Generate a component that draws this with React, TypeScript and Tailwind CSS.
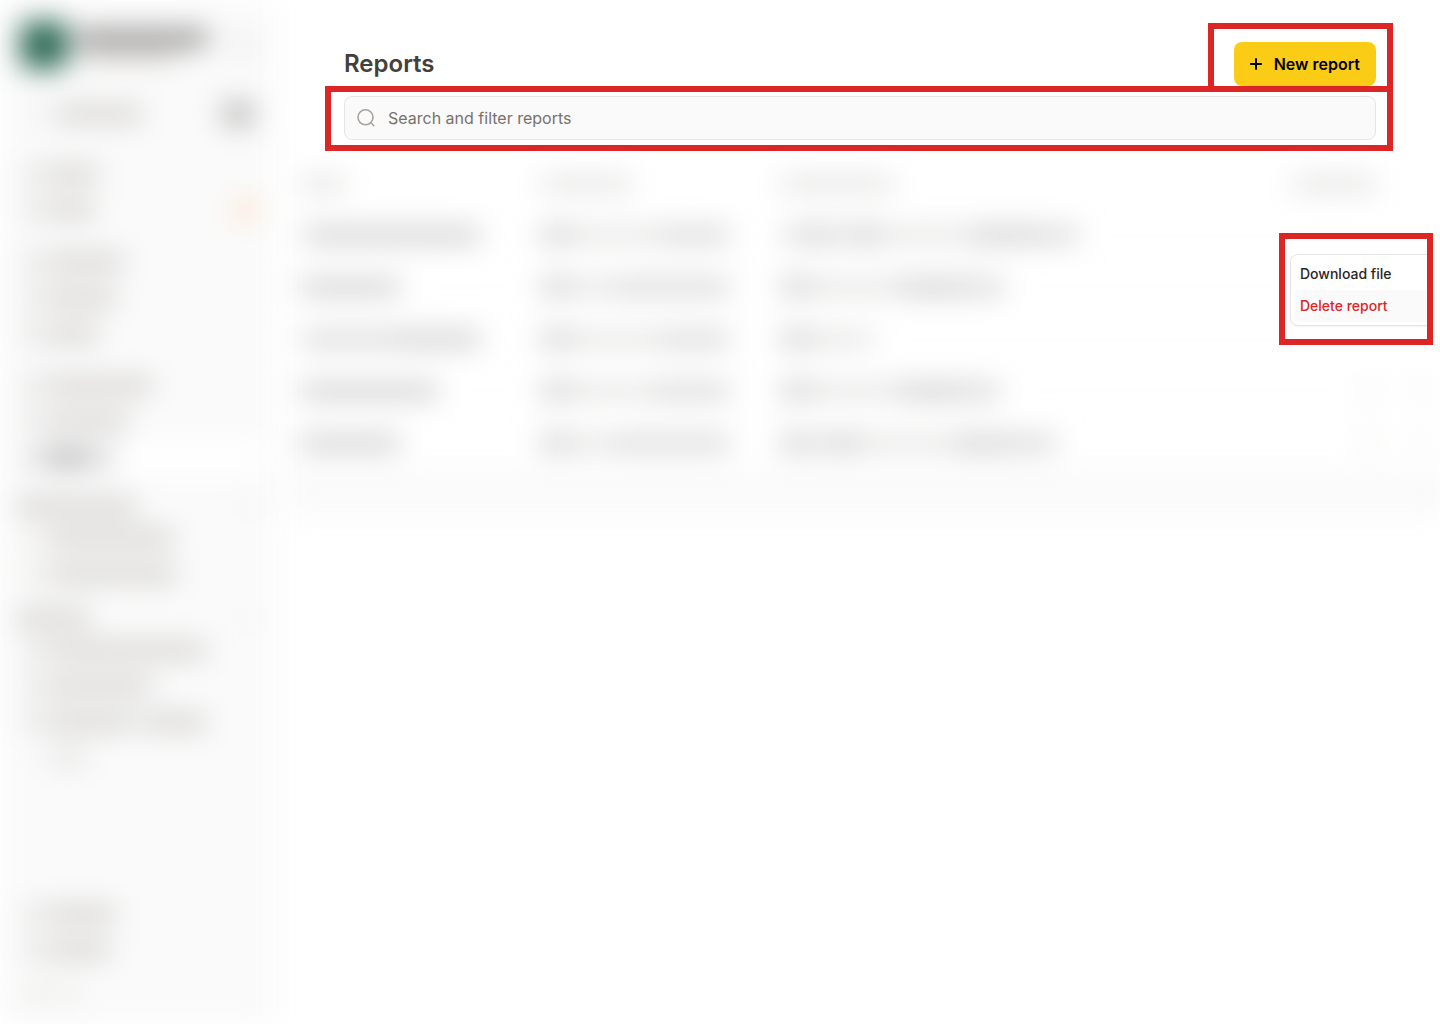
import React from "react";
import { Plus } from "lucide-react";

type Tone = "faint" | "light" | "mid" | "dark" | "strong" | "deep" | "warm" | "gap";
type Segment = [width: number, tone: Tone];

const tones: Record<Tone, string> = {
  faint: "bg-[#efeeec]",
  light: "bg-[#e4e4e3]",
  mid: "bg-[#d6d6d6]",
  dark: "bg-[#cecece]",
  strong: "bg-[#8a8a89]",
  deep: "bg-[#a6a6a6]",
  warm: "bg-[#d3d1cf]",
  gap: "bg-transparent",
};

/** A line of concealed text, drawn as a run of soft bars. */
function Line({ segments }: { segments: Segment[] }) {
  return (
    <span className="flex items-center">
      {segments.map(([width, tone], i) => (
        <span key={i} className={`h-4 shrink-0 ${tones[tone]}`} style={{ width }} />
      ))}
    </span>
  );
}

function NavItem({ segments, active = false, badge = false, icon = "light" }: {
  segments: Segment[];
  active?: boolean;
  badge?: boolean;
  icon?: Tone;
}) {
  return (
    <li className={`flex h-9 items-center rounded-lg pl-2 pr-1 ${active ? "bg-white" : ""}`}>
      <span className={`mr-1 h-5 w-5 rounded ${tones[icon]}`} />
      <Line segments={segments} />
      {badge && <span className="ml-auto size-5 rounded-full bg-[#ffd9b5]" />}
    </li>
  );
}

function SectionLabel({ width }: { width: number }) {
  return (
    <div className="flex h-7 items-center justify-between pr-1">
      <Line segments={[[width, "warm"]]} />
      <span className="size-3 bg-[#f1f0ef]" />
    </div>
  );
}

function Sidebar() {
  return (
    <aside aria-hidden="true" className="flex w-[276px] shrink-0 flex-col bg-[#fafafa] px-4 pb-3 pt-5 blur-[14px]">
      <div className="flex h-[50px] items-center pl-1">
        <span className="size-12 rounded-xl bg-[#2f6b57]" />
        <div className="ml-2 flex flex-col gap-1">
          <Line segments={[[132, "strong"]]} />
          <span className="ml-1 h-2.5 w-24 bg-[#cfcac7]" />
        </div>
        <span className="ml-auto mr-2 size-4 bg-[#e4e3e2]" />
      </div>
      <div className="mt-6 flex h-10 items-center pl-3 pr-1.5">
        <span className="mr-3 size-4 bg-[#f0efee]" />
        <Line segments={[[86, "warm"]]} />
        <span className="ml-auto h-6 w-8 rounded bg-[#bebcbb]" />
      </div>
      <ul className="mt-[22px]">
        <NavItem segments={[[50, "warm"]]} />
        <NavItem segments={[[46, "warm"]]} badge />
      </ul>
      <ul className="mt-4">
        <NavItem segments={[[76, "warm"]]} />
        <NavItem segments={[[68, "warm"]]} />
        <NavItem segments={[[50, "warm"]]} />
      </ul>
      <ul className="mt-4">
        <NavItem segments={[[104, "warm"]]} />
        <NavItem segments={[[80, "warm"]]} />
        <NavItem segments={[[36, "deep"], [30, "dark"]]} icon="mid" active />
      </ul>
      <div className="mt-4">
        <SectionLabel width={120} />
        <ul>
          <NavItem segments={[[126, "warm"]]} icon="faint" />
          <NavItem segments={[[128, "warm"]]} icon="faint" />
        </ul>
      </div>
      <div className="mt-3">
        <SectionLabel width={74} />
        <ul>
          <NavItem segments={[[158, "warm"]]} />
          <NavItem segments={[[104, "warm"]]} />
          <NavItem segments={[[80, "warm"], [20, "light"], [58, "warm"]]} />
          <NavItem segments={[[40, "light"]]} icon="gap" />
        </ul>
      </div>
      <ul className="mt-auto">
        <NavItem segments={[[68, "warm"]]} />
        <NavItem segments={[[62, "warm"]]} />
      </ul>
      <ul className="mt-2">
        <NavItem segments={[[32, "faint"]]} icon="faint" />
      </ul>
    </aside>
  );
}

const rows: { name: Segment[]; created: Segment[]; period: Segment[]; actions: boolean }[] = [
  {
    name: [[4, "gap"], [84, "dark"], [92, "dark"]],
    created: [[32, "dark"], [88, "light"], [70, "mid"]],
    period: [[18, "light"], [32, "dark"], [16, "light"], [34, "dark"], [92, "light"], [62, "dark"], [44, "mid"]],
    actions: false,
  },
  {
    name: [[100, "dark"]],
    created: [[32, "dark"], [40, "light"], [118, "mid"]],
    period: [[32, "dark"], [88, "light"], [62, "dark"], [42, "mid"]],
    actions: false,
  },
  {
    name: [[2, "gap"], [94, "mid"], [84, "dark"]],
    created: [[32, "dark"], [88, "light"], [70, "mid"]],
    period: [[32, "dark"], [62, "light"]],
    actions: false,
  },
  {
    name: [[138, "dark"]],
    created: [[32, "dark"], [82, "light"], [76, "mid"]],
    period: [[32, "dark"], [88, "light"], [62, "dark"], [38, "mid"]],
    actions: true,
  },
  {
    name: [[100, "dark"]],
    created: [[32, "dark"], [40, "light"], [118, "mid"]],
    period: [[32, "dark"], [14, "light"], [34, "dark"], [96, "light"], [50, "dark"], [50, "mid"]],
    actions: true,
  },
];

function ReportsTable() {
  return (
    <table aria-hidden="true" className="ml-2 mt-5 w-full table-fixed border-collapse blur-[14px]">
      <colgroup>
        <col className="w-[256px]" />
        <col className="w-[240px]" />
        <col />
        <col className="w-[156px]" />
      </colgroup>
      <thead>
        <tr className="h-[49px]">
          <th className="p-0 pl-4"><Line segments={[[46, "light"]]} /></th>
          <th className="p-0"><Line segments={[[92, "light"]]} /></th>
          <th className="p-0"><Line segments={[[114, "light"]]} /></th>
          <th className="p-0"><Line segments={[[84, "light"]]} /></th>
        </tr>
      </thead>
      <tbody>
        {rows.map((row, i) => (
          <tr key={i} className="h-[52px] border-t border-[#f7f7f7]">
            <td className="p-0 pl-4"><Line segments={row.name} /></td>
            <td className="p-0"><Line segments={row.created} /></td>
            <td className="p-0"><Line segments={row.period} /></td>
            <td className="p-0">
              {row.actions && <Line segments={[[70, "gap"], [14, "faint"], [40, "gap"], [10, "faint"]]} />}
            </td>
          </tr>
        ))}
      </tbody>
      <tfoot>
        <tr className="h-12 bg-[#fafafa]">
          <td colSpan={4} />
        </tr>
      </tfoot>
    </table>
  );
}

export default function App() {
  return (
    <div className="flex min-h-screen overflow-hidden bg-white font-['Inter',sans-serif]">
      <Sidebar />
      <main className="relative min-w-0 flex-1">
        <header className="pl-[68px] pr-16 pt-[42px]">
          <div className="flex h-11 items-center justify-between">
            <h1 className="text-2xl font-semibold text-[#44403c]">Reports</h1>
            <div className="relative">
              <button
                type="button"
                className="flex h-11 items-center gap-2 rounded-lg bg-[#facc15] pl-3 pr-4 text-base font-semibold text-black"
              >
                <Plus className="size-5" strokeWidth={2.4} strokeLinecap="butt" aria-hidden="true" />
                New report
              </button>
              <span className="pointer-events-none absolute -bottom-1.5 -left-[26px] -right-[17px] -top-[19px] border-[6px] border-[#dc2626]" />
            </div>
          </div>
          <div className="relative mt-2.5">
            <svg
              className="pointer-events-none absolute left-3 top-3 size-5 text-[#a8a29e]"
              viewBox="0 0 20 20"
              fill="none"
              stroke="currentColor"
              strokeWidth="1.6"
              strokeLinecap="round"
              aria-hidden="true"
            >
              <circle cx="9.5" cy="9.3" r="7.5" />
              <path d="m14.9 14.7 3 3" />
            </svg>
            <input
              type="search"
              aria-label="Search and filter reports"
              placeholder="Search and filter reports"
              className="block h-11 w-full rounded-lg border border-[#e5e5e5] bg-[#fafafa] pl-[43px] pr-3 text-base text-[#44403c] placeholder:text-[#78716c]"
            />
            <span className="pointer-events-none absolute -bottom-[11px] -left-[19px] -right-[17px] -top-2.5 border-[6px] border-[#dc2626]" />
          </div>
        </header>

        <ReportsTable />

        <div className="absolute right-[7px] top-[233px] h-28 w-[154px] overflow-hidden border-[6px] border-[#dc2626] bg-white pl-[5px] pt-[15px]">
          <div
            role="menu"
            className="flex w-40 flex-col rounded-lg border border-[#e5e5e5] bg-white p-[3px] text-sm font-medium shadow-xs"
          >
            <button type="button" role="menuitem" className="h-8 rounded-md px-1.5 text-left text-[#292524]">
              Download file
            </button>
            <button type="button" role="menuitem" className="h-8 rounded-md bg-[#fafafa] px-1.5 text-left text-[#dc2626]">
              Delete report
            </button>
          </div>
        </div>
      </main>
    </div>
  );
}
